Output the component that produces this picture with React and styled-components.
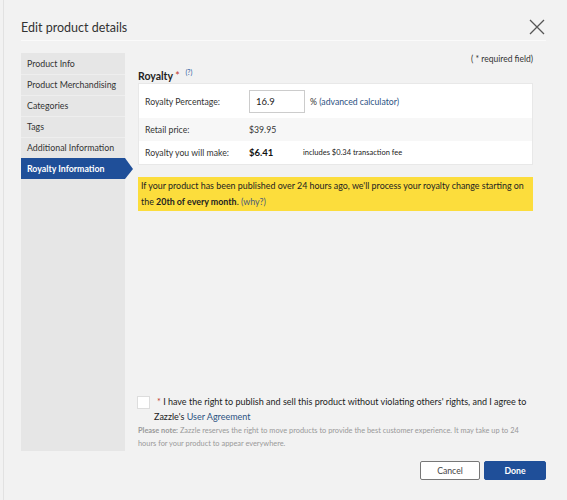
import React from "react";
import styled, { createGlobalStyle } from "styled-components";

const Global = createGlobalStyle`
  html, body { margin: 0; padding: 0; background: #f2f2f2; }
  body { font-family: Lato, "Open Sans", sans-serif; color: #222; }
`;

const menu = [
  "Product Info",
  "Product Merchandising",
  "Categories",
  "Tags",
  "Additional Information",
  "Royalty Information",
];

const App = () => {
  return (
    <Dialog>
      <Global />
      <Header>
        <Title>Edit product details</Title>
        <Close aria-label="close">
          <svg width="18" height="18" viewBox="0 0 18 18">
            <path d="M2 2 L16 16 M16 2 L2 16" stroke="#555" strokeWidth="1.3" fill="none" />
          </svg>
        </Close>
      </Header>
      <Body>
        <Sidebar>
          {menu.map((m) => (
            <NavItem key={m} $active={m === "Royalty Information"}>
              {m}
            </NavItem>
          ))}
        </Sidebar>
        <Main>
          <Required>( * required field)</Required>
          <SectionTitle>
            Royalty <Star>*</Star> <Help>(?)</Help>
          </SectionTitle>
          <Table>
            <Row $height={34}>
              <Label>Royalty Percentage:</Label>
              <Value>
                <Input defaultValue="16.9" />
                <Unit>
                  % <Link>(advanced calculator)</Link>
                </Unit>
              </Value>
            </Row>
            <Row $height={23} $shade>
              <Label>Retail price:</Label>
              <Value>$39.95</Value>
            </Row>
            <Row $height={23}>
              <Label>Royalty you will make:</Label>
              <Value>
                <Amount>$6.41</Amount>
                <Fee>includes $0.34 transaction fee</Fee>
              </Value>
            </Row>
          </Table>
          <Notice>
            If your product has been published over 24 hours ago, we'll process your royalty change
            starting on the <b>20th of every month</b>. <Why>(why?)</Why>
          </Notice>
          <Spacer />
          <Agree>
            <Check />
            <AgreeText>
              <Star>*</Star> I have the right to publish and sell this product without violating
              others' rights, and I agree to Zazzle's <Link>User Agreement</Link>
            </AgreeText>
          </Agree>
          <Note>
            <b>Please note:</b> Zazzle reserves the right to move products to provide the best
            customer experience. It may take up to 24 hours for your product to appear everywhere.
          </Note>
        </Main>
      </Body>
      <Footer>
        <Button>Cancel</Button>
        <Button $primary>Done</Button>
      </Footer>
    </Dialog>
  );
};
export default App;

const Dialog = styled.div`
  width: 564px;
  height: 500px;
  box-sizing: border-box;
  padding: 0 21px 0 17px;
  border-left: 1px solid #e2e2e2;
  margin-left: 3px;
  background: #f2f2f2;
  overflow: hidden;
`;

const Header = styled.div`
  height: 41px;
  display: flex;
  align-items: center;
  justify-content: space-between;
  border-bottom: 1px solid #fafafa;
  box-sizing: border-box;
`;

const Title = styled.div`
  font-size: 12.5px;
  color: #333;
  padding-top: 14px;
`;

const Close = styled.div`
  display: flex;
  padding-top: 14px;
`;

const Body = styled.div`
  display: flex;
  gap: 13px;
  margin-top: 12px;
  margin-right: 13px;
  height: 398px;
`;

const Sidebar = styled.div`
  width: 104px;
  flex: none;
  background: #e6e6e6;
  display: flex;
  flex-direction: column;
`;

const NavItem = styled.div`
  position: relative;
  height: 20px;
  line-height: 19px;
  padding-left: 6px;
  font-size: 8.8px;
  color: ${(p) => (p.$active ? "#fff" : "#333")};
  font-weight: ${(p) => (p.$active ? 700 : 400)};
  background: ${(p) => (p.$active ? "#1f4f99" : "#e6e6e6")};
  border-top: 1px solid ${(p) => (p.$active ? "#1f4f99" : "#eeeeee")};
  white-space: nowrap;
  &::after {
    content: "";
    display: ${(p) => (p.$active ? "block" : "none")};
    position: absolute;
    right: -8px;
    top: -1px;
    border-style: solid;
    border-width: 11px 0 10px 8px;
    border-color: transparent transparent transparent #1f4f99;
  }
  &:first-child {
    border-top-color: #e6e6e6;
  }
`;

const Main = styled.div`
  flex: 1;
  min-width: 0;
  display: flex;
  flex-direction: column;
`;

const Required = styled.div`
  text-align: right;
  font-size: 8.5px;
  color: #333;
  margin-top: 1px;
`;

const SectionTitle = styled.div`
  font-size: 10.5px;
  font-weight: 700;
  color: #222;
  margin-top: 4px;
  height: 15px;
`;

const Star = styled.span`
  color: #c0392b;
  font-weight: 400;
`;

const Help = styled.sup`
  font-size: 7px;
  color: #2c5aa0;
  font-weight: 400;
  margin-left: 3px;
`;

const Table = styled.div`
  background: #fff;
  border: 1px solid #e8e8e8;
  display: flex;
  flex-direction: column;
`;

const Row = styled.div`
  height: ${(p) => p.$height}px;
  display: flex;
  align-items: center;
  background: ${(p) => (p.$shade ? "#f7f7f7" : "#fff")};
  font-size: 8.7px;
  color: #333;
`;

const Label = styled.div`
  width: 104px;
  padding-left: 6px;
  flex: none;
`;

const Value = styled.div`
  display: flex;
  align-items: center;
  gap: 8px;
`;

const Input = styled.input`
  width: 56px;
  height: 23px;
  box-sizing: border-box;
  border: 1px solid #ccc;
  font: inherit;
  font-size: 9.5px;
  padding: 0 6px;
  color: #222;
  outline: none;
`;

const Unit = styled.span`
  margin-left: -3px;
`;

const Link = styled.span`
  color: #2c5282;
`;

const Amount = styled.span`
  font-weight: 700;
  font-size: 9.5px;
  width: 46px;
  color: #111;
`;

const Fee = styled.span`
  font-size: 7.5px;
  color: #222;
`;

const Notice = styled.div`
  margin-top: 12px;
  background: #fcdd3c;
  padding: 1px 6px 1px 3px;
  font-size: 8.9px;
  line-height: 16px;
  color: #222;
  b {
    font-weight: 700;
  }
`;

const Why = styled.span`
  color: #4a5a78;
`;

const Spacer = styled.div`
  flex: 1;
`;

const Agree = styled.div`
  display: flex;
  gap: 4px;
`;

const Check = styled.div`
  width: 11px;
  height: 11px;
  border: 1px solid #ddd;
  background: #fff;
  flex: none;
  margin-top: 1px;
  margin-left: -1px;
`;

const AgreeText = styled.div`
  font-size: 9px;
  line-height: 15px;
  color: #222;
  margin-top: -1px;
  text-indent: 3px;
`;

const Note = styled.div`
  font-size: 7.4px;
  line-height: 13px;
  color: #999;
  padding-bottom: 1px;
  padding-right: 8px;
  b {
    font-weight: 700;
  }
`;

const Footer = styled.div`
  display: flex;
  justify-content: flex-end;
  gap: 4px;
  margin-top: 10px;
`;

const Button = styled.button`
  width: ${(p) => (p.$primary ? 62 : 60)}px;
  height: 19px;
  box-sizing: border-box;
  font-family: Lato, "Open Sans", sans-serif;
  font-size: 8.7px;
  font-weight: ${(p) => (p.$primary ? 700 : 400)};
  color: ${(p) => (p.$primary ? "#fff" : "#444")};
  background: ${(p) => (p.$primary ? "#1f4f99" : "#fff")};
  border: 1px solid ${(p) => (p.$primary ? "#1f4f99" : "#777")};
  border-radius: 2px;
  padding: 0;
`;
